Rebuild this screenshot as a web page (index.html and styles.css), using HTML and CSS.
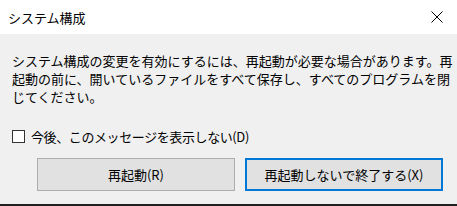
FILE: index.html
```html
<!DOCTYPE html>
<html lang="ja">
<head>
    <meta charset="UTF-8">
    <title>システム構成</title>
    <link rel="stylesheet" href="styles.css">
</head>
<body>
    <!-- barra de título -->
    <div class="titlebar">
        <span class="title">システム構成</span>
        <svg class="close" width="12" height="12" viewBox="0 0 12 12">
            <path d="M0.5 0.5 L11.5 11.5 M11.5 0.5 L0.5 11.5" stroke="#000" stroke-width="1" fill="none"/>
        </svg>
    </div>

    <div class="content">
        <p class="message">システム構成の変更を有効にするには、再起動が必要な場合があります。再起動の前に、開いているファイルをすべて保存し、すべてのプログラムを閉じてください。</p>

        <label class="check-row">
            <input type="checkbox" class="check">
            <span>今後、このメッセージを表示しない(D)</span>
        </label>

        <div class="buttons">
            <button class="btn">再起動(R)</button>
            <button class="btn btn-default">再起動しないで終了する(X)</button>
        </div>
    </div>
</body>
</html>
```

FILE: styles.css
```css
* {
    margin: 0;
    padding: 0;
    box-sizing: border-box;
}

html {
    background: #1f1f1f;
}

body {
    width: 457px;
    height: 204px;
    background: #f0f0f0;
    font-family: "Noto Sans CJK JP", sans-serif;
    font-size: 13px;
    color: #000;
}

.titlebar {
    height: 34px;
    background: #fff;
    display: flex;
    align-items: center;
    justify-content: space-between;
    padding: 0 14px 0 8px;
}

.title {
    font-size: 13px;
}

.content {
    padding: 18px 0 0 12px;
}

.message {
    line-height: 18px;
}

.check-row {
    display: flex;
    align-items: center;
    gap: 6px;
    height: 18px;
    margin-top: 21px;
    letter-spacing: -0.4px;
}

.check {
    appearance: none;
    width: 13px;
    height: 13px;
    border: 1px solid #333;
    background: #fff;
}

.buttons {
    display: flex;
    justify-content: flex-end;
    gap: 10px;
    margin-top: 13px;
    margin-right: 14px;
}

.btn {
    width: 198px;
    height: 33px;
    background: #e1e1e1;
    border: 1px solid #adadad;
    font-family: inherit;
    font-size: 13px;
    color: #000;
}

.btn-default {
    border: 2px solid #0078d7;
}
```
